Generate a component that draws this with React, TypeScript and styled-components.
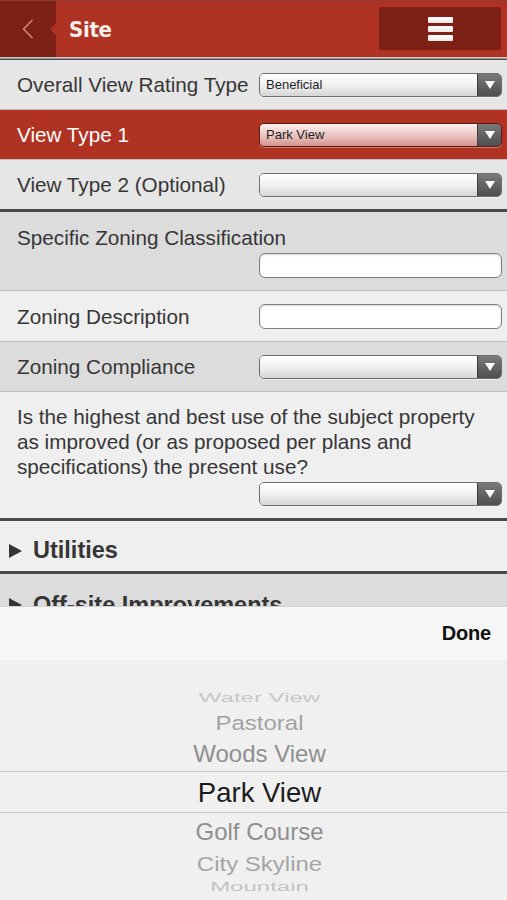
import React from "react";
import styled, { createGlobalStyle, css } from "styled-components";

const GlobalStyle = createGlobalStyle`
  html, body { margin: 0; padding: 0; }
  body {
    font-family: "Liberation Sans", Arial, Helvetica, sans-serif;
    background: #efefef;
    -webkit-font-smoothing: antialiased;
  }
  * { box-sizing: border-box; }
`;

const Page = styled.div`
  width: 507px;
  height: 900px;
  display: flex;
  flex-direction: column;
  overflow: hidden;
  background: #efefef;
`;

/* ---------- Header ---------- */
const Header = styled.header`
  height: 57px;
  flex: none;
  display: flex;
  align-items: stretch;
  background: #b03223;
  border-top: 1px solid #8e3b31;
`;

const BackButton = styled.div`
  position: relative;
  width: 56px;
  flex: none;
  display: flex;
  align-items: center;
  justify-content: center;
  background: #7d2117;
  &::after {
    content: "";
    position: absolute;
    right: 0;
    top: 22px;
    border-style: solid;
    border-width: 6px 6px 6px 0;
    border-color: transparent #b03223 transparent transparent;
  }
`;

const Title = styled.h1`
  margin: 0 0 0 13px;
  align-self: center;
  flex: 1;
  font-family: "DejaVu Sans Condensed", "DejaVu Sans", sans-serif;
  font-stretch: condensed;
  font-weight: 700;
  font-size: 22px;
  color: #f4ece9;
  letter-spacing: -0.3px;
`;

const MenuButton = styled.div`
  width: 122px;
  margin: 6px 6px 7px 0;
  border-radius: 2px;
  background: #7d2117;
  display: flex;
  flex-direction: column;
  align-items: center;
  justify-content: center;
  gap: 3px;
`;

const MenuBar = styled.span`
  display: block;
  width: 25px;
  height: 6px;
  background: linear-gradient(#ffffff, #efe6e4);
  border-radius: 1px;
`;

const HeaderRule = styled.div`
  height: 3px;
  flex: none;
  background: linear-gradient(#c9c9c9 0 1px, #9a9a9a 1px 2px, #4b4b4b 2px 3px);
`;

/* ---------- Form ---------- */
const Form = styled.div`
  flex: 1;
  min-height: 0;
  overflow: hidden;
  display: flex;
  flex-direction: column;
`;

type Tone = "mid" | "dark" | "light" | "red";

const toneBg: Record<Tone, string> = {
  mid: "#e6e6e6",
  dark: "#dcdcdc",
  light: "#efefef",
  red: "#b03223",
};

const Row = styled.div<{ $tone: Tone; $thick?: boolean; $h?: number }>`
  flex: none;
  height: ${(p) => p.$h ?? 50}px;
  display: grid;
  grid-template-columns: 1fr 243px;
  align-items: center;
  padding: 0 5px 0 17px;
  background: ${(p) => toneBg[p.$tone]};
  border-bottom: ${(p) => (p.$thick ? "3px solid #4a4a4a" : "1px solid #bdbdbd")};
`;

const StackRow = styled.div<{ $tone: Tone; $thick?: boolean; $pt: number }>`
  flex: none;
  display: flex;
  flex-direction: column;
  padding: ${(p) => p.$pt}px 5px 12px 17px;
  background: ${(p) => toneBg[p.$tone]};
  border-bottom: ${(p) => (p.$thick ? "3px solid #4a4a4a" : "1px solid #bdbdbd")};
`;

const Label = styled.span<{ $light?: boolean }>`
  font-size: 20.7px;
  line-height: 25px;
  color: ${(p) => (p.$light ? "#ffffff" : "#363636")};
  white-space: nowrap;
`;

const Question = styled.p`
  margin: 0;
  padding-right: 12px;
  font-size: 20.7px;
  line-height: 25px;
  color: #363636;
`;

const FieldSlot = styled.div<{ $mt: number }>`
  align-self: flex-end;
  width: 243px;
  margin-top: ${(p) => p.$mt}px;
`;

const SelectBox = styled.div<{ $red?: boolean }>`
  height: 24px;
  display: flex;
  border: 1px solid #6e6e6e;
  border-radius: 5px;
  overflow: hidden;
  box-shadow: 0 1px 0 rgba(255, 255, 255, 0.35);
  ${(p) =>
    p.$red &&
    css`
      border-color: #5a1d16;
    `}
`;

const SelectValue = styled.div<{ $red?: boolean }>`
  flex: 1;
  display: flex;
  align-items: center;
  padding-left: 6px;
  font-size: 13px;
  color: #1e1e1e;
  background: ${(p) =>
    p.$red
      ? "linear-gradient(#fbf1f0 0%, #e9c2bf 55%, #d4928c 100%)"
      : "linear-gradient(#ffffff 0%, #f1f1f1 50%, #d6d6d6 100%)"};
`;

const SelectArrow = styled.div`
  width: 24px;
  flex: none;
  display: flex;
  align-items: center;
  justify-content: center;
  border-left: 1px solid #3e3e3e;
  background: linear-gradient(#7a7a7a, #4e4e4e);
  &::before {
    content: "";
    border-style: solid;
    border-width: 8px 5px 0 5px;
    border-color: #ffffff transparent transparent transparent;
  }
`;

const TextInput = styled.div`
  height: 25px;
  border: 1px solid #7e7e7e;
  border-radius: 6px;
  background: #ffffff;
  box-shadow: inset 0 1px 2px rgba(0, 0, 0, 0.15);
`;

const Select = ({ value, red }: { value?: string; red?: boolean }) => (
  <SelectBox $red={red}>
    <SelectValue $red={red}>{value}</SelectValue>
    <SelectArrow />
  </SelectBox>
);

const SectionRow = styled.div<{ $tone: Tone; $thick?: boolean }>`
  flex: none;
  height: 53px;
  display: flex;
  align-items: center;
  gap: 11px;
  padding: 9px 0 0 9px;
  background: ${(p) => toneBg[p.$tone]};
  border-bottom: ${(p) => (p.$thick ? "3px solid #4a4a4a" : "none")};
`;

const Caret = styled.span`
  width: 0;
  height: 0;
  border-style: solid;
  border-width: 7px 0 7px 13px;
  border-color: transparent transparent transparent #353535;
`;

const SectionTitle = styled.span`
  font-size: 23.5px;
  font-weight: 700;
  color: #353535;
  white-space: nowrap;
`;

/* ---------- Picker ---------- */
const Picker = styled.div`
  height: 294px;
  flex: none;
  display: flex;
  flex-direction: column;
  background: #f0f0f0;
  border-top: 1px solid #d2d2d2;
`;

const Toolbar = styled.div`
  height: 53px;
  flex: none;
  display: flex;
  align-items: center;
  justify-content: flex-end;
  padding: 0 16px 0 0;
  background: #f6f6f6;
`;

const DoneButton = styled.span`
  font-size: 20px;
  font-weight: 700;
  color: #111;
  letter-spacing: -0.2px;
`;

const Wheel = styled.div`
  flex: 1;
  display: flex;
  flex-direction: column;
  padding: 27px 0 0 12px;
  overflow: hidden;
`;

const WheelItem = styled.div<{ $h: number; $color: string; $selected?: boolean }>`
  height: ${(p) => p.$h}px;
  flex: none;
  display: flex;
  align-items: center;
  justify-content: center;
  font-size: ${(p) => (p.$selected ? 27.5 : 24)}px;
  color: ${(p) => p.$color};
  white-space: nowrap;
  ${(p) =>
    p.$selected &&
    css`
      margin-left: -12px;
      padding: 2px 0 0 12px;
      border-top: 1px solid #cdcdcd;
      border-bottom: 1px solid #cdcdcd;
    `}
`;

const WheelText = styled.span<{ $scale: number }>`
  display: inline-block;
  transform: scaleY(${(p) => p.$scale});
`;

const wheelItems = [
  { label: "Water View", h: 22, scale: 0.5, color: "#c7c7c7" },
  { label: "Pastoral", h: 28, scale: 0.86, color: "#a3a3a3" },
  { label: "Woods View", h: 34, scale: 1, color: "#8f8f8f" },
  { label: "Park View", h: 42, scale: 1, color: "#1c1c1c", selected: true },
  { label: "Golf Course", h: 37, scale: 1, color: "#8f8f8f" },
  { label: "City Skyline", h: 28, scale: 0.82, color: "#a5a5a5" },
  { label: "Mountain", h: 18, scale: 0.52, color: "#c4c4c4" },
  { label: "Oceanfront", h: 12, scale: 0.25, color: "#d2d2d2" },
];

export default function App() {
  return (
    <Page>
      <GlobalStyle />
      <Header>
        <BackButton>
          <svg width="14" height="22" viewBox="0 0 14 22">
            <path d="M11.5 2 L2.5 11 L11.5 20" fill="none" stroke="#d98d84" strokeWidth="1.4" />
          </svg>
        </BackButton>
        <Title>Site</Title>
        <MenuButton>
          <MenuBar />
          <MenuBar />
          <MenuBar />
        </MenuButton>
      </Header>
      <HeaderRule />
      <Form>
        <Row $tone="mid">
          <Label>Overall View Rating Type</Label>
          <Select value="Beneficial" />
        </Row>
        <Row $tone="red">
          <Label $light>View Type 1</Label>
          <Select value="Park View" red />
        </Row>
        <Row $tone="mid" $thick $h={52}>
          <Label>View Type 2 (Optional)</Label>
          <Select />
        </Row>
        <StackRow $tone="dark" $pt={13}>
          <Label>Specific Zoning Classification</Label>
          <FieldSlot $mt={3}>
            <TextInput />
          </FieldSlot>
        </StackRow>
        <Row $tone="light" $h={51}>
          <Label>Zoning Description</Label>
          <TextInput />
        </Row>
        <Row $tone="dark">
          <Label>Zoning Compliance</Label>
          <Select />
        </Row>
        <StackRow $tone="light" $thick $pt={12}>
          <Question>
            Is the highest and best use of the subject property as improved (or as proposed per plans
            and specifications) the present use?
          </Question>
          <FieldSlot $mt={3}>
            <Select />
          </FieldSlot>
        </StackRow>
        <SectionRow $tone="light" $thick>
          <Caret />
          <SectionTitle>Utilities</SectionTitle>
        </SectionRow>
        <SectionRow $tone="dark">
          <Caret />
          <SectionTitle>Off-site Improvements</SectionTitle>
        </SectionRow>
      </Form>
      <Picker>
        <Toolbar>
          <DoneButton>Done</DoneButton>
        </Toolbar>
        <Wheel>
          {wheelItems.map((it) => (
            <WheelItem key={it.label} $h={it.h} $color={it.color} $selected={it.selected}>
              <WheelText $scale={it.scale}>{it.label}</WheelText>
            </WheelItem>
          ))}
        </Wheel>
      </Picker>
    </Page>
  );
}
